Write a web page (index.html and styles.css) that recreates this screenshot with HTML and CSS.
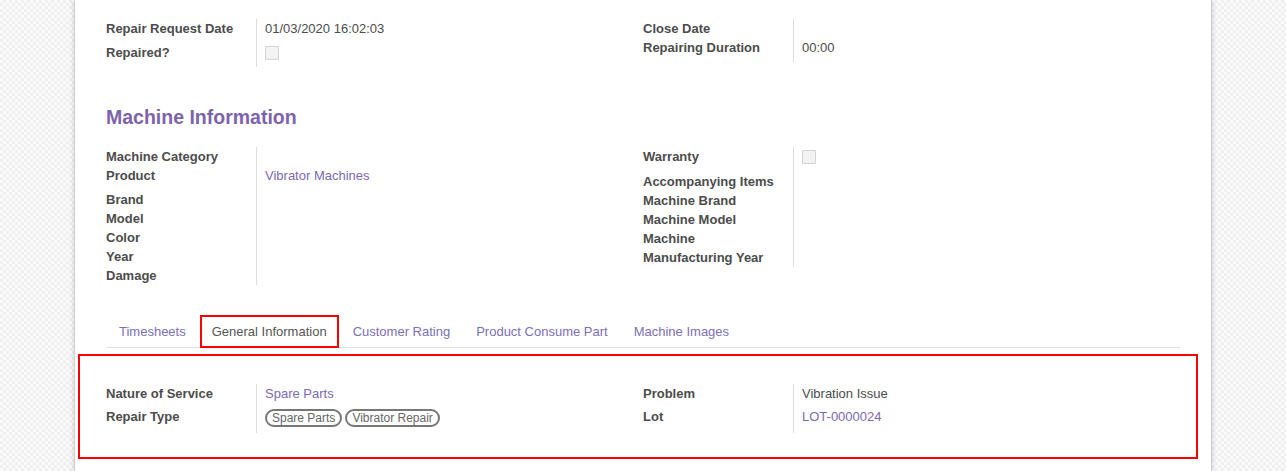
FILE: index.html
```html
<!DOCTYPE html>
<html>
<head>
<meta charset="utf-8">
<link rel="stylesheet" href="styles.css">
</head>
<body>
<div class="sheet">
  <div class="group">
    <div class="col">
      <div class="fields">
        <div class="lbl">Repair Request Date</div><div class="val h24">01/03/2020 16:02:03</div>
        <div class="lbl">Repaired?</div><div class="val h24"><span class="checkbox"></span></div>
      </div>
    </div>
    <div class="col">
      <div class="fields">
        <div class="lbl">Close Date</div><div class="val"></div>
        <div class="lbl">Repairing Duration</div><div class="val h24">00:00</div>
      </div>
    </div>
  </div>

  <h2 class="separator">Machine Information</h2>

  <div class="group">
    <div class="col">
      <div class="fields">
        <div class="lbl">Machine Category</div><div class="val"></div>
        <div class="lbl">Product</div><div class="val h24"><a class="link">Vibrator Machines</a></div>
        <div class="lbl">Brand</div><div class="val"></div>
        <div class="lbl">Model</div><div class="val"></div>
        <div class="lbl">Color</div><div class="val"></div>
        <div class="lbl">Year</div><div class="val"></div>
        <div class="lbl">Damage</div><div class="val"></div>
      </div>
    </div>
    <div class="col">
      <div class="fields">
        <div class="lbl">Warranty</div><div class="val h25"><span class="checkbox"></span></div>
        <div class="lbl">Accompanying Items</div><div class="val"></div>
        <div class="lbl">Machine Brand</div><div class="val"></div>
        <div class="lbl">Machine Model</div><div class="val"></div>
        <div class="lbl">Machine</div><div class="val"></div>
        <div class="lbl">Manufacturing Year</div><div class="val"></div>
      </div>
    </div>
  </div>

  <div class="notebook">
    <ul class="tabs">
      <li class="tab">Timesheets</li>
      <li class="tab active">General Information</li>
      <li class="tab">Customer Rating</li>
      <li class="tab">Product Consume Part</li>
      <li class="tab">Machine Images</li>
    </ul>
    <div class="page">
      <div class="group">
        <div class="col">
          <div class="fields">
            <div class="lbl">Nature of Service</div><div class="val h23"><a class="link">Spare Parts</a></div>
            <div class="lbl">Repair Type</div><div class="val h26"><span class="tag">Spare Parts</span><span class="tag">Vibrator Repair</span></div>
          </div>
        </div>
        <div class="col">
          <div class="fields">
            <div class="lbl">Problem</div><div class="val h23">Vibration Issue</div>
            <div class="lbl">Lot</div><div class="val h26"><a class="link">LOT-0000024</a></div>
          </div>
        </div>
      </div>
    </div>
  </div>
</div>
</body>
</html>
```

FILE: styles.css
```css
html, body {
  margin: 0;
  padding: 0;
  height: 100%;
}
body {
  font-family: "Liberation Sans", Arial, sans-serif;
  font-size: 13px;
  color: #4c4c4c;
  background-color: #f7f7f7;
  background-image: repeating-conic-gradient(#efefef 0 25%, #fbfbfb 0 50%);
  background-size: 6px 6px;
  overflow: hidden;
}
.sheet {
  box-sizing: border-box;
  width: 1138px;
  min-height: 520px;
  margin: 0 auto;
  background: #fff;
  border-left: 1px solid #cfcfcf;
  border-right: 1px solid #cbc9dc;
  box-shadow: 0 0 5px rgba(0, 0, 0, 0.18);
  padding: 19px 31px 40px 31px;
}
.group {
  display: flex;
}
.col {
  width: 50%;
}
.fields {
  display: grid;
  grid-template-columns: 151px 1fr;
  align-items: stretch;
}
.lbl {
  font-weight: bold;
  line-height: 19px;
  border-right: 1px solid #ddd;
  white-space: nowrap;
}
.val {
  padding-left: 8px;
  line-height: 19px;
  min-height: 19px;
}
.val.h23 { min-height: 23px; }
.val.h24 { min-height: 24px; }
.val.h25 { min-height: 25px; }
.val.h26 { min-height: 26px; }
.checkbox {
  display: block;
  box-sizing: border-box;
  width: 14px;
  height: 14px;
  margin-top: 3px;
  border: 1px solid #d4d4d4;
  border-radius: 1px;
  background: #f3f3f3;
}
.link {
  color: #7c69b3;
  text-decoration: none;
}
.separator {
  margin: 35px 0 15px;
  font-size: 19.5px;
  line-height: 30px;
  font-weight: bold;
  color: #7d63ad;
}
.notebook {
  margin-top: 30px;
}
.tabs {
  display: flex;
  list-style: none;
  margin: 0;
  padding: 0 0 0 1px;
  border-bottom: 1px solid #dee2e6;
}
.tab {
  margin-right: 2px;
  margin-bottom: -1px;
  padding: 6px 11px;
  line-height: 19px;
  border: 1px solid transparent;
  color: #7c6fb8;
}
.tab.active {
  padding: 5px 10px;
  border: 2px solid #f00;
  color: #555;
  background: #fff;
}
.page {
  margin: 6px -18px 0 -28px;
  border: 2px solid #f00;
  padding: 28px 16px 24px 26px;
}
.tag {
  display: inline-block;
  margin-top: 2px;
  margin-right: 3px;
  padding: 0 5px;
  height: 18px;
  box-sizing: border-box;
  line-height: 14px;
  font-size: 12px;
  color: #666;
  border: 2px solid #777;
  border-radius: 10px;
  vertical-align: top;
}
```
